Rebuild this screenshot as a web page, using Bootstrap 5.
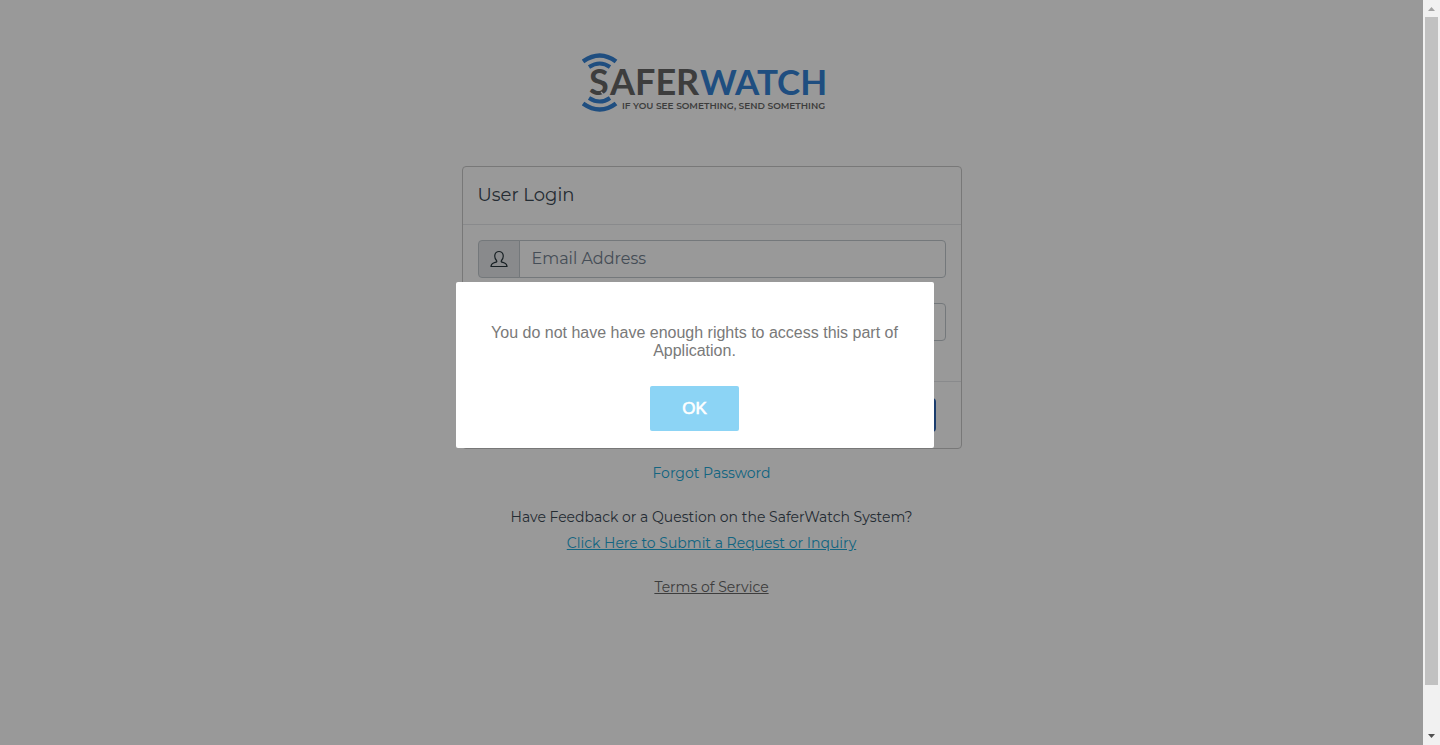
<!DOCTYPE html>
<html lang="en">
<head>
<meta charset="utf-8">
<meta name="viewport" content="width=device-width, initial-scale=1">
<title>SaferWatch - User Login</title>
<link href="https://cdn.jsdelivr.net/npm/bootstrap@5.3.0/dist/css/bootstrap.min.css" rel="stylesheet">
<style>
  body { font-family: Montserrat, Inter, sans-serif; font-size: 14px; font-weight: 400; line-height: 26px; color: #3d4a56; background: #fff; }
  .logo-row { padding: 52px 0 53px; }
  .logo-row svg { width: 260px; height: 61px; }
  .login-card { max-width: 500px; border: 1px solid #c9c9c9; border-radius: 4px; }
  .login-card .card-header { background: none; border-color: #e4e7ea; padding: 16px 15px; }
  .login-card h1 { font-size: 18px; font-weight: 400; line-height: 25px; color: #3d4a56; }
  .login-card .card-body { padding: 15px 15px 40px; }
  .login-card .card-footer { background: none; border-color: #e4e7ea; padding: 16px 25px; }
  .login-card .input-group { height: 38px; border-radius: 4px; }
  .login-card .input-group + .input-group { margin-top: 25px; }
  .login-card .input-group-text { width: 42px; background: #e4e7ea; border-color: #c2c9ce; color: #29363d; border-radius: 4px; }
  .login-card .form-control { font-size: 16px; font-weight: 400; line-height: 22px; border-color: #c2c9ce; border-radius: 4px; }
  .login-card .form-control::placeholder { color: #73818f; }
  .btn-login { height: 34px; background: #2c64b4; color: #fff; padding: 0 20px; border-radius: 4px; }
  .help-links { padding-top: 11px; }
  .help-gap { margin-top: 18px; }
  .page-link-blue { color: #20a8d8; }
  .tos-link { color: #666; }
  .shade { background: rgba(0,0,0,.4); z-index: 10; }
  .alert-box { top: 49%; left: 50%; width: 478px; margin-left: -256px; transform: translateY(-50%); z-index: 20; background: #fff; border-radius: 2px; padding: 42px 17px 17px; font-family: "Liberation Sans", Arial, sans-serif; }
  .alert-box p { font-size: 16px; font-weight: 400; line-height: 18px; color: #797979; margin-bottom: 26px; padding: 0 16px; }
  .btn-ok { font-size: 17px; font-weight: 400; line-height: 25px; color: #fff; background: #8cd4f5; border: 0; border-radius: 2px; padding: 10px 32px; -webkit-text-stroke: .6px #fff; }
  .scroll-rail { width: 17px; background: #f1f1f1; }
  .scroll-rail svg { width: 17px; height: 17px; }
  .scroll-thumb { width: 13px; height: 94%; background: #c1c1c1; }
</style>
</head>
<body>
<div class="d-flex min-vh-100">
  <main class="position-relative flex-grow-1">
    <div class="d-flex justify-content-center logo-row">
      <svg viewBox="0 0 260 61" role="img" aria-label="SaferWatch">
        <g fill="none" stroke="#3482d5" stroke-width="4.500">
          <path d="M1 9.500Q18 -2.500 34 9.500"/>
          <path d="M7 15Q18 8 28 15" stroke-width="4"/>
          <path d="M7 46Q18 53 28 46" stroke-width="4"/>
          <path d="M1 51.500Q18 63.500 34 51.500"/>
        </g>
        <g font-family="Lato, sans-serif" font-weight="700">
          <text x="7" y="43" font-size="36" fill="#666">S</text>
          <text x="28" y="43" font-size="36" fill="#666">AFER</text>
          <text x="118" y="43" font-size="35" fill="#3482d5">WATCH</text>
        </g>
        <text x="40" y="57" font-size="9" font-family="Montserrat, sans-serif" font-weight="600" fill="#666">IF YOU SEE SOMETHING, SEND SOMETHING</text>
        <path d="M6 34l6 2M22 25l5-3M19 40l4 4" stroke="#fff" stroke-width="1.200"/>
      </svg>
    </div>
    <form class="card login-card mx-auto">
      <div class="card-header"><h1 class="mb-0">User Login</h1></div>
      <div class="card-body">
        <div class="input-group">
          <label class="input-group-text justify-content-center p-0" for="email" aria-label="Email Address">
            <svg width="18" height="18" viewBox="0 0 18 18" fill="none" stroke="currentColor" stroke-width="1.200"><path d="M6.500 10.500C3.500 7 4.500 1.500 9 1.500S14.500 7 11.500 10.500C10.500 12 12 12 14 12.800 16.500 13.800 17 14.500 17 16.500H1C1 14.500 1.500 13.800 4 12.800 6 12 7.500 12 6.500 10.500Z"/></svg>
          </label>
          <input type="email" class="form-control" id="email" placeholder="Email Address">
        </div>
        <div class="input-group">
          <label class="input-group-text justify-content-center p-0" for="password" aria-label="Password">
            <svg width="18" height="18" viewBox="0 0 18 18" fill="none" stroke="currentColor"><path d="M3 8h12v9H3zM6 8V5a3 3 0 0 1 6 0v3"/></svg>
          </label>
          <input type="password" class="form-control" id="password" placeholder="Password">
        </div>
      </div>
      <div class="card-footer d-flex justify-content-end"><button type="submit" class="btn btn-login">Login</button></div>
    </form>
    <div class="text-center help-links">
      <div><a href="#" class="page-link-blue text-decoration-none">Forgot Password</a></div>
      <div class="help-gap">Have Feedback or a Question on the SaferWatch System?</div>
      <div><a href="#" class="page-link-blue">Click Here to Submit a Request or Inquiry</a></div>
      <div class="help-gap"><a href="#" class="tos-link">Terms of Service</a></div>
    </div>
    <div class="shade position-absolute top-0 start-0 w-100 h-100"></div>
    <div class="alert-box position-absolute text-center" role="alertdialog" aria-modal="true" aria-describedby="msg">
      <p id="msg">You do not have have enough rights to access this part of Application.</p>
      <button type="button" class="btn-ok">OK</button>
    </div>
  </main>
  <div class="scroll-rail d-flex flex-column align-items-center flex-shrink-0 vh-100" aria-hidden="true">
    <svg viewBox="0 0 17 17"><path d="M5 11L8.500 7 12 11z" fill="#a3a3a3"/></svg>
    <div class="flex-grow-1 d-flex"><div class="scroll-thumb"></div></div>
    <svg viewBox="0 0 17 17"><path d="M5 6h7L8.500 10z" fill="#505050"/></svg>
  </div>
</div>
<script src="https://cdn.jsdelivr.net/npm/bootstrap@5.3.0/dist/js/bootstrap.bundle.min.js"></script>
</body>
</html>
